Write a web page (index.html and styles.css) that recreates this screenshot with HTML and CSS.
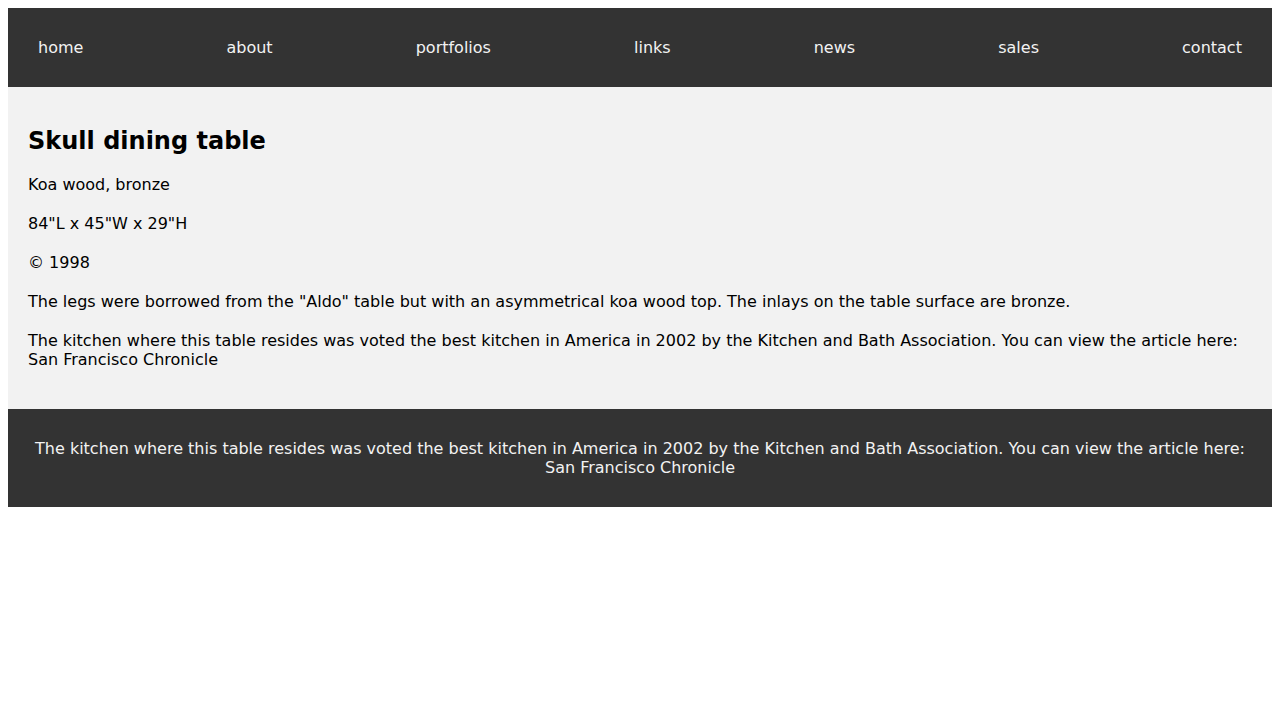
FILE: index.html
```html
<!DOCTYPE html>
<html lang="en">
<head>
<meta charset="utf-8">
<title>Skull dining table</title>
<link rel="stylesheet" href="styles.css">
</head>
<body>
<nav class="nav">
  <a class="nav-link" href="#">home</a>
  <a class="nav-link" href="#">about</a>
  <a class="nav-link" href="#">portfolios</a>
  <a class="nav-link" href="#">links</a>
  <a class="nav-link" href="#">news</a>
  <a class="nav-link" href="#">sales</a>
  <a class="nav-link" href="#">contact</a>
</nav>
<main class="content">
  <h2 class="title">Skull dining table</h2>
  <p class="para">Koa wood, bronze</p>
  <p class="para">84"L x 45"W x 29"H</p>
  <p class="para">© 1998</p>
  <p class="para">The legs were borrowed from the "Aldo" table but with an asymmetrical koa wood top. The inlays on the table surface are bronze.</p>
  <p class="para">The kitchen where this table resides was voted the best kitchen in America in 2002 by the Kitchen and Bath Association. You can view the article here:<br>San Francisco Chronicle</p>
</main>
<footer class="footer">
  <p class="footer-text">The kitchen where this table resides was voted the best kitchen in America in 2002 by the Kitchen and Bath Association. You can view the article here:<br>San Francisco Chronicle</p>
</footer>
</body>
</html>
```
FILE: styles.css
```css
body {
  margin: 8px;
  font-family: "DejaVu Sans", sans-serif;
  font-size: 16px;
  background: #fff;
}
.nav {
  background: #333;
  padding: 30px;
  display: flex;
  justify-content: space-between;
}
.nav-link {
  color: #f2f2f2;
  text-decoration: none;
}
.content {
  background: #f2f2f2;
  padding: 20px;
  color: #000;
}
.title {
  font-size: 24px;
  margin: 20px 0;
}
.para {
  margin: 20px 0;
}
.footer {
  background: #333;
  color: #f2f2f2;
  text-align: center;
  padding: 30px 20px;
}
.footer-text {
  margin: 0;
}
```
